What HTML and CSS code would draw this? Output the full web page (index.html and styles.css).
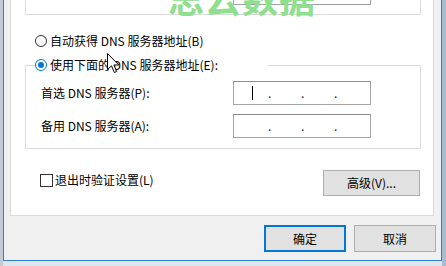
FILE: index.html
```html
<!DOCTYPE html>
<html lang="zh-CN">
<head>
<meta charset="utf-8">
<title>DNS</title>
<link rel="stylesheet" href="styles.css">
</head>
<body>
<div class="window">
  <div class="panel">
    <div class="topgroup">
      <div class="topinput"></div>
    </div>
    <div class="radio-row">
      <span class="radio"></span>
      <span class="label">自动获得 DNS 服务器地址(B)</span>
    </div>
    <fieldset class="group">
      <legend class="legend">
        <span class="radio checked"></span>
        <span class="label">使用下面的 DNS 服务器地址(E):</span>
      </legend>
      <div class="field-row first">
        <span class="field-label">首选 DNS 服务器(P):</span>
        <div class="ipbox">
          <span class="seg seg-first"><span class="caret"></span></span>
          <span class="dot">.</span>
          <span class="seg"></span>
          <span class="dot">.</span>
          <span class="seg"></span>
          <span class="dot">.</span>
        </div>
      </div>
      <div class="field-row">
        <span class="field-label">备用 DNS 服务器(A):</span>
        <div class="ipbox">
          <span class="seg seg-first"></span>
          <span class="dot">.</span>
          <span class="seg"></span>
          <span class="dot">.</span>
          <span class="seg"></span>
          <span class="dot">.</span>
        </div>
      </div>
    </fieldset>
    <div class="bottom-row">
      <label class="check-row">
        <span class="checkbox"></span>
        <span class="label">退出时验证设置(L)</span>
      </label>
      <button class="btn btn-adv">高级(V)...</button>
    </div>
  </div>
  <div class="dialog-buttons">
    <button class="btn btn-dlg btn-default">确定</button>
    <button class="btn btn-dlg">取消</button>
  </div>
</div>
<div class="watermark">思云数据</div>
<svg class="cursor" width="13" height="21" viewBox="0 0 13 21">
  <path d="M0.5 0.5 L0.5 16.5 L4.5 12.8 L7.3 19.5 L9.6 18.5 L6.9 12 L11.8 12 Z" fill="#fff" stroke="#000" stroke-width="1" stroke-linejoin="miter"/>
</svg>
</body>
</html>
```
FILE: styles.css
```css
* { box-sizing: border-box; }

html, body {
  margin: 0;
  padding: 0;
}

body {
  position: relative;
  width: 446px;
  height: 266px;
  overflow: hidden;
  background:
    linear-gradient(to right, #c3ccd5 0, #c3ccd5 3px, transparent 3px, transparent 442px, #a7bcd2 442px),
    #dfe5eb;
  font-family: "Noto Sans CJK SC", "Noto Sans", sans-serif;
  font-size: 12px;
  color: #000;
}

.window {
  margin-left: 3px;
  width: 439px;
  height: 261px;
  background: #f0f0f0;
  border: 1px solid #2f7fd1;
  border-top: none;
  padding-left: 6px;
}

.panel {
  width: 424px;
  height: 216px;
  background: #fff;
  border: 1px solid #d9d9d9;
  border-top: none;
  display: flex;
  flex-direction: column;
}

.topgroup {
  margin: 0 12px 0 14px;
  height: 15px;
  border: 1px solid #dcdcdc;
  border-top: none;
}

.topinput {
  margin-left: 207px;
  width: 138px;
  height: 5px;
  border: 1px solid #a0a0a0;
  border-top: none;
}

.radio-row {
  margin-top: 18px;
  padding-left: 24px;
  display: flex;
  align-items: center;
  height: 16px;
}

.radio {
  flex: none;
  width: 12px;
  height: 12px;
  border: 1px solid #333;
  border-radius: 50%;
  background: #fff;
  margin-right: 3px;
  position: relative;
}

.radio.checked {
  border-color: #0078d7;
}

.radio.checked::after {
  content: "";
  position: absolute;
  left: 2px;
  top: 2px;
  width: 6px;
  height: 6px;
  border-radius: 50%;
  background: #0078d7;
}

.label {
  line-height: 16px;
  white-space: nowrap;
}

.group {
  margin: 8px 12px 0 14px;
  padding: 0 0 10px 0;
  border: 1px solid #dcdcdc;
  min-width: 0;
}

.legend {
  margin-left: 9px;
  padding: 0;
  width: 233px;
  height: 16px;
  display: flex;
  align-items: center;
}

.field-row {
  display: flex;
  align-items: center;
  height: 24px;
  margin-top: 9px;
}

.field-row.first {
  margin-top: 8px;
}

.field-label {
  width: 207px;
  padding-left: 15px;
  white-space: nowrap;
  line-height: 16px;
}

.ipbox {
  width: 138px;
  height: 24px;
  border: 1px solid #a5a5a5;
  border-top-color: #8c8c8c;
  background: #fff;
  display: flex;
  align-items: flex-start;
}

.seg {
  width: 30px;
  height: 22px;
}

.seg-first {
  width: 34px;
  position: relative;
}

.caret {
  position: absolute;
  left: 18px;
  top: 4px;
  width: 1px;
  height: 14px;
  background: #000;
}

.dot {
  width: 3px;
  text-align: center;
  line-height: 16px;
  margin-top: 3px;
  color: #222;
}

.bottom-row {
  margin: 21px 13px 0 29px;
  display: flex;
  justify-content: space-between;
  align-items: flex-start;
}

.check-row {
  margin-top: 2px;
  display: flex;
  align-items: center;
  height: 16px;
}

.checkbox {
  width: 13px;
  height: 13px;
  border: 1px solid #333;
  background: #fff;
  margin-right: 2px;
}

.btn {
  font-family: "Noto Sans CJK SC", "Noto Sans", sans-serif;
  font-size: 12px;
  color: #000;
  background: #e1e1e1;
  border: 1px solid #adadad;
  padding: 0;
  margin: 0;
  line-height: 16px;
}

.btn-adv {
  width: 97px;
  height: 26px;
}

.dialog-buttons {
  margin-top: 9px;
  margin-right: 5px;
  display: flex;
  justify-content: flex-end;
  gap: 8px;
}

.btn-dlg {
  width: 82px;
  height: 27px;
}

.btn-default {
  border: 2px solid #0078d7;
}

.watermark {
  position: absolute;
  left: 168px;
  top: -21px;
  font-size: 36px;
  line-height: 36px;
  font-weight: 700;
  letter-spacing: 1px;
  color: #8ee08e;
  white-space: nowrap;
  pointer-events: none;
}

.cursor {
  position: absolute;
  left: 107px;
  top: 53px;
}
```
